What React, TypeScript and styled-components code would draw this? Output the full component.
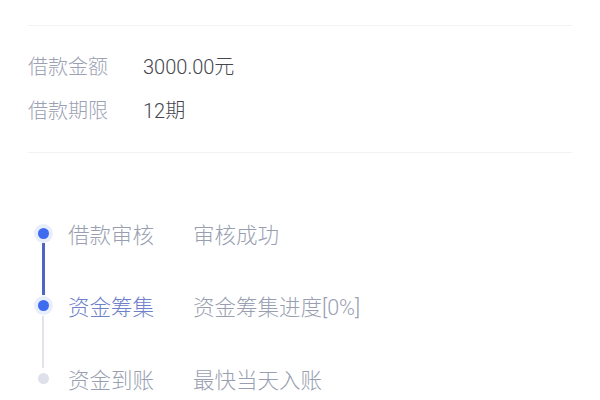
import React from 'react';
import styled, { createGlobalStyle } from 'styled-components';

const GlobalStyle = createGlobalStyle`
  body {
    margin: 0;
    background: #ffffff;
    font-family: Roboto, "Noto Sans CJK SC", sans-serif;
    font-weight: 300;
  }
`;

const Page = styled.div`
  padding: 25px 28px 0;
`;

const Divider = styled.div`
  height: 1px;
  background: #f1f2f5;
`;

const InfoList = styled.div`
  padding: 17px 0 21px;
`;

const InfoRow = styled.div`
  display: flex;
  align-items: center;
  height: 44px;
  font-size: 20px;
`;

const InfoLabel = styled.span`
  width: 115px;
  color: #9ba1b3;
`;

const InfoValue = styled.span`
  color: #45464e;
`;

const Timeline = styled.div`
  padding-top: 44px;
`;

const Step = styled.div<{ $line?: 'done' | 'todo' }>`
  position: relative;
  display: flex;
  align-items: center;
  height: 72.5px;
  font-size: 21.5px;

  &::after {
    content: '';
    display: ${(p) => (p.$line ? 'block' : 'none')};
    position: absolute;
    left: 14px;
    top: 46px;
    width: ${(p) => (p.$line === 'done' ? 3 : 2)}px;
    height: 52px;
    background: ${(p) => (p.$line === 'done' ? '#5064c4' : '#e1e3ea')};
  }
`;

const Marker = styled.div`
  width: 40px;
  display: flex;
  justify-content: flex-start;
  padding-left: 10px;
  box-sizing: border-box;
`;

const Dot = styled.span<{ $active?: boolean }>`
  width: 11px;
  height: 11px;
  border-radius: 50%;
  background: ${(p) => (p.$active ? '#3e6cef' : '#dfe1ea')};
  box-shadow: ${(p) => (p.$active ? '0 0 0 4px #e9eefc' : 'none')};
`;

const StepLabel = styled.span<{ $current?: boolean }>`
  width: 125px;
  color: ${(p) => (p.$current ? '#6e80c9' : '#999fb1')};
`;

const StepValue = styled.span`
  color: #999fb1;
`;

const steps = [
  { label: '借款审核', value: '审核成功', active: true, current: false, line: 'done' as const },
  { label: '资金筹集', value: '资金筹集进度[0%]', active: true, current: true, line: 'todo' as const },
  { label: '资金到账', value: '最快当天入账', active: false, current: false, line: undefined },
];

const App: React.FC = () => {
  return (
    <>
      <GlobalStyle />
      <Page>
        <Divider />
        <InfoList>
          <InfoRow>
            <InfoLabel>借款金额</InfoLabel>
            <InfoValue>3000.00元</InfoValue>
          </InfoRow>
          <InfoRow>
            <InfoLabel>借款期限</InfoLabel>
            <InfoValue>12期</InfoValue>
          </InfoRow>
        </InfoList>
        <Divider />
        <Timeline>
          {steps.map((s) => (
            <Step key={s.label} $line={s.line}>
              <Marker>
                <Dot $active={s.active} />
              </Marker>
              <StepLabel $current={s.current}>{s.label}</StepLabel>
              <StepValue>{s.value}</StepValue>
            </Step>
          ))}
        </Timeline>
      </Page>
    </>
  );
};

export default App;
